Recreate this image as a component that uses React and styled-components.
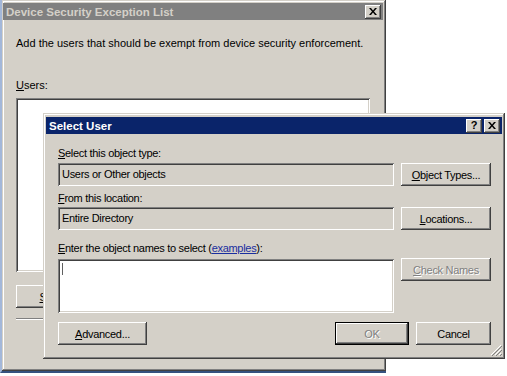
import React from "react";
import styled, { createGlobalStyle } from "styled-components";

const GlobalStyle = createGlobalStyle`
  html, body {
    margin: 0;
    padding: 0;
    background: #fff;
  }
  body {
    font-family: "Liberation Sans", Arial, sans-serif;
  }
`;

const raised = `
  inset -1px -1px #404040,
  inset 1px 1px #ffffff,
  inset -2px -2px #808080,
  inset 2px 2px #d4d0c8
`;

const sunken = `
  inset 1px 1px #808080,
  inset -1px -1px #ffffff,
  inset 2px 2px #404040,
  inset -2px -2px #d4d0c8
`;

const Desktop = styled.div`
  position: relative;
  width: 507px;
  height: 376px;
  overflow: hidden;
  background: #fff;
`;

const Window = styled.div`
  position: absolute;
  left: ${(p) => p.$left}px;
  top: ${(p) => p.$top}px;
  width: ${(p) => p.$width}px;
  height: ${(p) => p.$height}px;
  box-sizing: border-box;
  padding: 4px 3px 3px;
  background: #d4d0c8;
  box-shadow: inset -1px -1px #404040, inset 1px 1px #d4d0c8,
    inset -2px -2px #808080, inset 2px 2px #ffffff;
  display: flex;
  flex-direction: column;
`;

const BackWindow = styled(Window)`
  border-left: 2px solid #a3b7d9;
  border-bottom: 2px solid #35527f;
  padding: 3px 3px 3px 1px;
`;

const TitleBar = styled.div`
  height: 17px;
  flex: none;
  display: flex;
  align-items: center;
  justify-content: space-between;
  padding: 0 2px 0 3px;
  background: ${(p) => (p.$active ? "#0a246a" : "#808080")};
  color: ${(p) => (p.$active ? "#ffffff" : "#d4d0c8")};
  font-weight: bold;
  font-size: 11.5px;
`;

const TitleButtons = styled.div`
  display: flex;
  gap: 2px;
`;

const TitleButton = styled.div`
  width: 16px;
  height: 14px;
  box-sizing: border-box;
  background: #d4d0c8;
  box-shadow: ${raised};
  display: flex;
  align-items: center;
  justify-content: center;
  color: #000;
  font-size: 11px;
  font-weight: bold;
  line-height: 1;
`;

const BackBody = styled.div`
  display: flex;
  flex-direction: column;
  align-items: flex-start;
  padding: 0 13px;
`;

const Text = styled.div`
  font-size: ${(p) => p.$size || 11}px;
  line-height: 14px;
  color: #000;
  margin-top: ${(p) => p.$mt || 0}px;
  letter-spacing: ${(p) => p.$ls || 0}px;
  white-space: nowrap;
`;

const ListBox = styled.div`
  width: 354px;
  height: 174px;
  margin-top: 6px;
  background: #fff;
  box-shadow: ${sunken};
`;

const Separator = styled.div`
  align-self: stretch;
  height: 2px;
  margin-top: 10px;
  border-top: 1px solid #808080;
  border-bottom: 1px solid #ffffff;
  box-sizing: border-box;
`;

const FrontBody = styled.div`
  display: flex;
  flex-direction: column;
  padding: 0 11px 0 12px;
  flex: 1;
  position: relative;
`;

const Row = styled.div`
  display: flex;
  gap: 7px;
  align-items: flex-start;
  margin-top: ${(p) => p.$mt || 0}px;
`;

const Field = styled.div`
  width: 336px;
  height: ${(p) => p.$height || 23}px;
  box-sizing: border-box;
  background: ${(p) => (p.$white ? "#ffffff" : "#d4d0c8")};
  box-shadow: ${sunken};
  padding: 4px 4px 0;
  font-size: 11px;
  letter-spacing: -0.3px;
  line-height: 14px;
  color: #000;
  position: relative;
`;

const Caret = styled.div`
  width: 1px;
  height: 12px;
  background: #606060;
`;

const Button = styled.div`
  width: ${(p) => p.$width || 90}px;
  height: 23px;
  box-sizing: border-box;
  background: #d4d0c8;
  box-shadow: ${(p) =>
    p.$default
      ? `inset 0 0 0 1px #000, inset -2px -2px #404040, inset 2px 2px #ffffff, inset -3px -3px #808080`
      : raised};
  display: flex;
  align-items: center;
  justify-content: center;
  font-size: 11px;
  letter-spacing: -0.3px;
  color: ${(p) => (p.$disabled ? "#808080" : "#000")};
  text-shadow: ${(p) => (p.$disabled ? "1px 1px #ffffff" : "none")};
  flex: none;
  margin-top: ${(p) => p.$mt || 0}px;
`;

const Footer = styled.div`
  display: flex;
  align-items: center;
  margin-top: 9px;
`;

const FooterRight = styled.div`
  display: flex;
  gap: 7px;
  margin-left: auto;
`;

const Link = styled.span`
  color: #1a2ea0;
  text-decoration: underline;
`;

const Grip = styled.svg`
  position: absolute;
  right: 0;
  bottom: 0;
`;

const CloseGlyph = () => (
  <svg width="8" height="7" viewBox="0 0 8 7">
    <path d="M0 0h2l2 2.5L6 0h2L5 3.5 8 7H6L4 4.5 2 7H0l3-3.5z" fill="#000" />
  </svg>
);

const App = () => {
  return (
    <>
      <GlobalStyle />
      <Desktop>
        <BackWindow $left={0} $top={0} $width={386} $height={373}>
          <TitleBar>
            <span>Device Security Exception List</span>
            <TitleButton>
              <CloseGlyph />
            </TitleButton>
          </TitleBar>
          <BackBody>
            <Text $mt={16}>
              Add the users that should be exempt from device security enforcement.
            </Text>
            <Text $mt={28}>
              <u>U</u>sers:
            </Text>
            <ListBox />
            <Button $width={84} $mt={13}>
              <u>S</u>elect...
            </Button>
            <Separator />
          </BackBody>
        </BackWindow>

        <Window $left={43} $top={113} $width={462} $height={246}>
          <TitleBar $active>
            <span>Select User</span>
            <TitleButtons>
              <TitleButton>?</TitleButton>
              <TitleButton>
                <CloseGlyph />
              </TitleButton>
            </TitleButtons>
          </TitleBar>
          <FrontBody>
            <Text $mt={12} $ls={-0.3}>
              <u>S</u>elect this object type:
            </Text>
            <Row $mt={3}>
              <Field>Users or Other objects</Field>
              <Button>
                <u>O</u>bject Types...
              </Button>
            </Row>
            <Text $mt={5} $ls={-0.3}>
              <u>F</u>rom this location:
            </Text>
            <Row $mt={2}>
              <Field>Entire Directory</Field>
              <Button>
                <u>L</u>ocations...
              </Button>
            </Row>
            <Text $mt={11} $ls={-0.3}>
              <u>E</u>nter the object names to select (<Link>examples</Link>):
            </Text>
            <Row $mt={4}>
              <Field $white $height={54}>
                <Caret />
              </Field>
              <Button $disabled $mt={-1}>
                <u>C</u>heck Names
              </Button>
            </Row>
            <Footer>
              <Button $width={89}>
                <u>A</u>dvanced...
              </Button>
              <FooterRight>
                <Button $width={74} $default $disabled>
                  OK
                </Button>
                <Button $width={75}>Cancel</Button>
              </FooterRight>
            </Footer>
            <Grip width="12" height="12" viewBox="0 0 12 12">
              <path d="M11 1L1 11M11 5L5 11M11 9L9 11" stroke="#ffffff" strokeWidth="1" />
              <path d="M12 2L2 12M12 6L6 12M12 10L10 12" stroke="#808080" strokeWidth="1" />
            </Grip>
          </FrontBody>
        </Window>
      </Desktop>
    </>
  );
};

export default App;
